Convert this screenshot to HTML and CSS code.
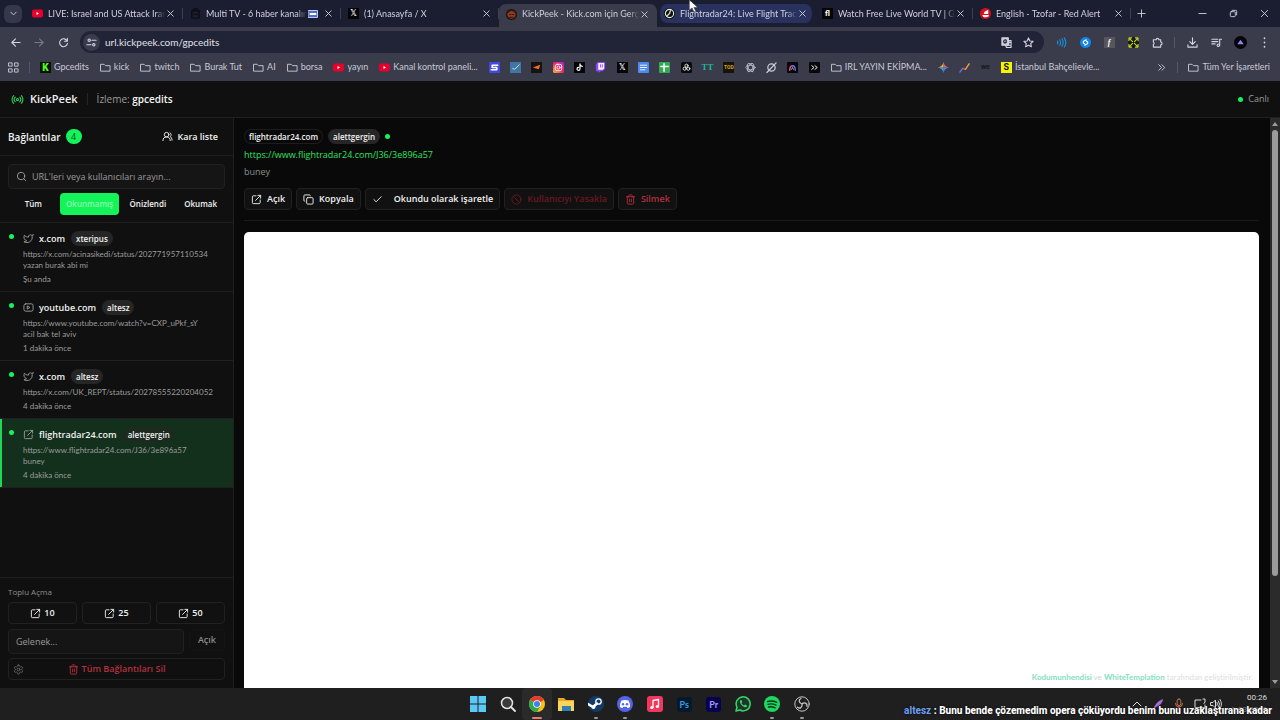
FILE: index.html
```
<!DOCTYPE html>
<html lang="tr">
<head>
<meta charset="utf-8">
<meta name="viewport" content="width=device-width, initial-scale=1.0">
<title>KickPeek - Kick.com için Gerçek Zamanlı</title>
<link rel="stylesheet" href="styles.css">
</head>
<body>

<svg class="sprite" aria-hidden="true">
  <symbol id="i-x" viewBox="0 0 10 10"><path d="M2 2l6 6M8 2l-6 6"/></symbol>
  <symbol id="i-down" viewBox="0 0 24 24"><path d="M6 9l6 6 6-6"/></symbol>
  <symbol id="i-folder" viewBox="0 0 24 20"><path d="M2 3h7l3 3h10v12H2z"/></symbol>
  <symbol id="i-yt" viewBox="0 0 22 16"><rect width="22" height="16" rx="4" fill="#e8002d" stroke="none"/><path d="M9 5l5 3-5 3z" fill="#fff" stroke="none"/></symbol>
  <symbol id="i-radio" viewBox="0 0 24 24"><path d="M4.9 19.1C1 15.2 1 8.8 4.9 4.9M7.8 16.2c-2.3-2.3-2.3-6.1 0-8.5M16.2 7.8c2.3 2.3 2.3 6.1 0 8.5M19.1 4.9C23 8.8 23 15.1 19.1 19"/><circle cx="12" cy="12" r="2"/></symbol>
  <symbol id="i-users" viewBox="0 0 24 24"><path d="M18 21a8 8 0 0 0-16 0"/><circle cx="10" cy="8" r="5"/><path d="M22 20c0-3.37-2-6.5-4-8a5 5 0 0 0-.45-8.3"/></symbol>
  <symbol id="i-search" viewBox="0 0 24 24"><circle cx="11" cy="11" r="8"/><path d="M21 21l-4.3-4.3"/></symbol>
  <symbol id="i-twitter" viewBox="0 0 24 24"><path d="M22 4s-.7 2.1-2 3.4c1.6 10-9.4 17.3-18 11.6 2.2.1 4.4-.6 6-2C3 15.5.5 9.6 3 5c2.2 2.6 5.6 4.1 9 4-.9-4.2 4-6.6 7-3.8 1.1 0 3-1.2 3-1.2z"/></symbol>
  <symbol id="i-youtube" viewBox="0 0 24 24"><rect x="2" y="4" width="20" height="16" rx="4"/><path d="M10 9l5 3-5 3z"/></symbol>
  <symbol id="i-open" viewBox="0 0 24 24"><path d="M20 13v6a2 2 0 0 1-2 2H5a2 2 0 0 1-2-2V6a2 2 0 0 1 2-2h6M21 3L10 14M15 3h6v6"/></symbol>
  <symbol id="i-copy" viewBox="0 0 24 24"><rect x="8" y="8" width="14" height="14" rx="2"/><path d="M4 16c-1.1 0-2-.9-2-2V4c0-1.1.9-2 2-2h10c1.1 0 2 .9 2 2"/></symbol>
  <symbol id="i-check" viewBox="0 0 24 24"><path d="M20 6L9 17l-5-5"/></symbol>
  <symbol id="i-ban" viewBox="0 0 24 24"><circle cx="12" cy="12" r="10"/><path d="M4.9 4.9l14.2 14.2"/></symbol>
  <symbol id="i-trash" viewBox="0 0 24 24"><path d="M3 6h18M19 6v14c0 1-1 2-2 2H7c-1 0-2-1-2-2V6M8 6V4c0-1 1-2 2-2h4c1 0 2 1 2 2v2M10 11v6M14 11v6"/></symbol>
  <symbol id="i-gear" viewBox="0 0 24 24"><path d="M12.22 2h-.44a2 2 0 0 0-2 2v.18a2 2 0 0 1-1 1.73l-.43.25a2 2 0 0 1-2 0l-.15-.08a2 2 0 0 0-2.73.73l-.22.38a2 2 0 0 0 .73 2.73l.15.1a2 2 0 0 1 1 1.72v.51a2 2 0 0 1-1 1.74l-.15.09a2 2 0 0 0-.73 2.73l.22.38a2 2 0 0 0 2.73.73l.15-.08a2 2 0 0 1 2 0l.43.25a2 2 0 0 1 1 1.73V20a2 2 0 0 0 2 2h.44a2 2 0 0 0 2-2v-.18a2 2 0 0 1 1-1.73l.43-.25a2 2 0 0 1 2 0l.15.08a2 2 0 0 0 2.73-.73l.22-.39a2 2 0 0 0-.73-2.73l-.15-.08a2 2 0 0 1-1-1.74v-.5a2 2 0 0 1 1-1.74l.15-.09a2 2 0 0 0 .73-2.73l-.22-.38a2 2 0 0 0-2.73-.73l-.15.08a2 2 0 0 1-2 0l-.43-.25a2 2 0 0 1-1-1.73V4a2 2 0 0 0-2-2z"/><circle cx="12" cy="12" r="3"/></symbol>
</svg>

<!-- browser tabs -->
<div class="tabstrip">
  <button class="tab-search" aria-label="Sekmelerde ara"><svg class="icon"><use href="#i-down"/></svg></button>
  <div class="tab">
    <svg class="fav"><use href="#i-yt"/></svg>
    <span class="tab-title">LIVE: Israel and US Attack Iran -</span>
    <button class="tab-close" aria-label="Kapat"><svg><use href="#i-x"/></svg></button>
  </div>
  <div class="tab">
    <svg class="fav" viewBox="0 0 12 12"><path d="M2 3h8v8H2zM4 1h4v2H4zM4 7h4" fill="none" stroke="#0b0d16" stroke-width="1.5"/></svg>
    <span class="tab-title">Multi TV - 6 haber kanalını</span>
    <svg class="pip" viewBox="0 0 10 8"><rect x=".5" y=".5" width="9" height="7" fill="#5271c4" stroke="#b9c8f5"/><path d="M2.500 4h5" stroke="#fff" stroke-width="2"/></svg>
    <button class="tab-close" aria-label="Kapat"><svg><use href="#i-x"/></svg></button>
  </div>
  <div class="tab">
    <span class="fav tile black math">𝕏</span>
    <span class="tab-title">(1) Anasayfa / X</span>
    <button class="tab-close" aria-label="Kapat"><svg><use href="#i-x"/></svg></button>
  </div>
  <div class="tab active">
    <svg class="fav" viewBox="0 0 12 12"><circle cx="6" cy="6" r="6" fill="#1c1210"/><circle cx="6" cy="6" r="4.500" fill="#8a3e22"/><path d="M2 4c2-3 6-3 8 0M4 6h1.500M7 6h1.500M4 9h4" stroke="#2c130c" fill="none"/></svg>
    <span class="tab-title">KickPeek - Kick.com için Gerçek</span>
    <button class="tab-close" aria-label="Kapat"><svg><use href="#i-x"/></svg></button>
  </div>
  <div class="tab hover">
    <svg class="fav" viewBox="0 0 12 12"><circle cx="6" cy="6" r="6" fill="#0d0f14"/><circle cx="6" cy="6" r="4.500" fill="none" stroke="#e8ecd8" stroke-width="1.200"/><path d="M6 6L3 9M6 6l1-3" stroke="#cfd6b0" stroke-width="1.500"/></svg>
    <span class="tab-title">Flightradar24: Live Flight Tracker</span>
    <button class="tab-close" aria-label="Kapat"><svg><use href="#i-x"/></svg></button>
  </div>
  <div class="tab">
    <span class="fav tile black">fl</span>
    <span class="tab-title">Watch Free Live World TV | Glo</span>
    <button class="tab-close" aria-label="Kapat"><svg><use href="#i-x"/></svg></button>
  </div>
  <div class="tab">
    <svg class="fav" viewBox="0 0 12 12"><circle cx="6" cy="6" r="6" fill="#d9101c"/><path d="M2.500 7.500h7v1.500q-3 2-6 .500zM4 6.500l1-2.500 4-2v4.500z" fill="#fff" stroke="none"/></svg>
    <span class="tab-title">English - Tzofar - Red Alert</span>
    <button class="tab-close" aria-label="Kapat"><svg><use href="#i-x"/></svg></button>
  </div>
  <button class="new-tab" aria-label="Yeni sekme"><svg viewBox="0 0 10 10"><path d="M5 1v8M1 5h8"/></svg></button>
  <div class="window-controls">
    <button aria-label="Küçült"><svg viewBox="0 0 10 10"><path d="M1 5h8"/></svg></button>
    <button aria-label="Geri yükle"><svg viewBox="0 0 10 10"><rect x="1.500" y="3" width="5.500" height="5.500" rx="1"/><path d="M3.500 1.500H7.500a1 1 0 0 1 1 1v4"/></svg></button>
    <button aria-label="Kapat"><svg viewBox="0 0 10 10"><path d="M1.500 1.500l7 7M8.500 1.500l-7 7"/></svg></button>
  </div>
  <svg class="cursor" viewBox="0 0 10 14"><path d="M1 0v11l3-2.500 2 4.500 2-1-2-4h4z" fill="#fff" stroke="#333" stroke-width=".6"/></svg>
</div>

<!-- address bar -->
<div class="toolbar">
  <button class="nav-btn" aria-label="Geri"><svg viewBox="0 0 12 12"><path d="M11 6H2M6 2L2 6l4 4"/></svg></button>
  <button class="nav-btn dim" aria-label="İleri"><svg viewBox="0 0 12 12"><path d="M1 6h9M6 2l4 4-4 4"/></svg></button>
  <button class="nav-btn" aria-label="Yenile"><svg viewBox="0 0 12 12"><path d="M10 4.500A4.300 4.300 0 1 0 10.300 7M10.200 1.500v3.200H7"/></svg></button>
  <div class="omnibox">
    <button class="site-info" aria-label="Site bilgileri"><svg viewBox="0 0 12 12"><circle cx="3.500" cy="3.500" r="1.300"/><path d="M6.500 3.500H11M1 8.500h4.500"/><circle cx="8.500" cy="8.500" r="1.300"/></svg></button>
    <input type="text" aria-label="Adres" value="url.kickpeek.com/gpcedits">
    <button aria-label="Çevir"><svg viewBox="0 0 12 12"><rect x="1" y="1" width="7" height="8" fill="#c9cad6"/><path d="M6.500 4H11v7.500H6L5 9" /><path d="M7 6h3.500M8.700 5v1c0 2-1 3-2 3.500M7.500 7c.5 1.500 1.500 2 2.500 2.500"/><path d="M6 4a1.700 1.700 0 1 0 .1 1.500H4.500" stroke="#2a2c3e"/></svg></button>
    <button aria-label="Yer işareti ekle"><svg viewBox="0 0 12 12"><path d="M6 1l1.500 3.300 3.500.4-2.600 2.400.7 3.500L6 8.900l-3.100 1.700.7-3.500L1 4.700l3.500-.4z"/></svg></button>
  </div>
  <div class="extensions">
    <button aria-label="Eklenti"><svg viewBox="0 0 12 12"><path d="M1.500 4.500q1 1.500 0 3M4 3q2 3 0 6M6.500 2q2.500 4 0 8M9 1q3.500 5 0 10" stroke="#1693e6"/></svg></button>
    <button aria-label="Shazam"><svg viewBox="0 0 12 12"><circle cx="6" cy="6" r="6" fill="#1286e8" stroke="none"/><path d="M6.800 3L4 4.600a1.500 1.500 0 0 0 0 2.200l1.200.700M5.200 9L8 7.400a1.500 1.500 0 0 0 0-2.200L6.800 4.500" stroke="#fff"/></svg></button>
    <button aria-label="Yazı tipi"><span class="tile grey"><i>f</i></span></button>
    <button aria-label="Tam ekran"><svg viewBox="0 0 12 12"><rect width="12" height="12" fill="#15170f" stroke="none"/><path d="M1 4V1h3M8 1h3v3M11 8v3H8M4 11H1V8M2 2l3 3M10 2L7 5M10 10L7 7M2 10l3-3" stroke="#c3d93a"/></svg></button>
    <button aria-label="Uzantılar"><svg viewBox="0 0 12 12"><path d="M1.500 3H4.500a1.500 1.500 0 0 1 3 0h2v2.500a1.500 1.500 0 0 1 0 3V11h-8V8a1.400 1.400 0 0 0 0-2.500z"/></svg></button>
    <span class="divider"></span>
    <button aria-label="İndirilenler"><svg viewBox="0 0 12 12"><path d="M6 1v6.500M3 5l3 3 3-3M1 8.500V11h10V8.500"/></svg></button>
    <button aria-label="Medya"><svg viewBox="0 0 12 12"><path d="M1 2.500h6.500M1 5h6.500M1 7.500h3.500M11.500 2.500H9.500V9"/><circle cx="8" cy="9" r="1.300"/></svg></button>
    <button aria-label="Profil"><svg class="avatar" viewBox="0 0 14 14"><circle cx="7" cy="7" r="7" fill="#05050a" stroke="none"/><path d="M7 4l3.500 5h-7z" fill="#8d84f0" stroke="none"/></svg></button>
    <button aria-label="Menü"><svg viewBox="0 0 12 12"><path d="M6 1.200v.4M6 5.800v.4M6 10.400v.4" stroke-width="1.800"/></svg></button>
  </div>
</div>

<!-- bookmarks -->
<nav class="bookmarks">
  <a href="#" aria-label="Uygulamalar"><svg class="bm-icon" viewBox="0 0 12 12"><path d="M1 1h3.500v3.500H1zM7.500 1H11v3.500H7.500zM1 7.500h3.500V11H1zM7.500 7.500H11V11H7.500z"/></svg></a>
  <span class="divider"></span>
  <a href="#"><span class="tile kick">K</span>Gpcedits</a>
  <a href="#"><svg class="bm-icon folder"><use href="#i-folder"/></svg>kick</a>
  <a href="#"><svg class="bm-icon folder"><use href="#i-folder"/></svg>twitch</a>
  <a href="#"><svg class="bm-icon folder"><use href="#i-folder"/></svg>Burak Tut</a>
  <a href="#"><svg class="bm-icon folder"><use href="#i-folder"/></svg>AI</a>
  <a href="#"><svg class="bm-icon folder"><use href="#i-folder"/></svg>borsa</a>
  <a href="#"><svg class="bm-icon"><use href="#i-yt"/></svg>yayın</a>
  <a href="#"><svg class="bm-icon"><use href="#i-yt"/></svg>Kanal kontrol paneli...</a>
  <div class="bm-sites">
    <a href="#" aria-label="Streamlabs"><svg class="bm-icon" viewBox="0 0 12 12"><rect width="12" height="12" fill="#4348e0" stroke="none"/><path d="M9.500 3.500h-6V6h5v2.500h-6" stroke="#fff" stroke-width="1.800"/></svg></a>
    <a href="#" aria-label="Çizim"><svg class="bm-icon" viewBox="0 0 12 12"><rect width="12" height="12" fill="#3f76a3" stroke="none"/><path d="M3 7l2 1 5-5" stroke="#d8ecf5"/></svg></a>
    <a href="#" aria-label="Oyun"><svg class="bm-icon" viewBox="0 0 12 12"><rect width="12" height="12" fill="#17120f" stroke="none"/><path d="M2 6l8-3-1.500 5z" fill="#e8722a" stroke="none"/></svg></a>
    <a href="#" aria-label="Instagram"><svg class="bm-icon" viewBox="0 0 12 12"><defs><linearGradient id="ig" x1="0" y1="1" x2="1" y2="0"><stop offset="0" stop-color="#ffb52e"/><stop offset=".5" stop-color="#f5245f"/><stop offset="1" stop-color="#a32be0"/></linearGradient></defs><rect width="12" height="12" rx="2" fill="url(#ig)" stroke="none"/><rect x="2.500" y="2.500" width="7" height="7" rx="2" stroke="#fff"/><circle cx="6" cy="6" r="1.700" stroke="#fff"/></svg></a>
    <a href="#" aria-label="TikTok"><svg class="bm-icon" viewBox="0 0 12 12"><rect width="12" height="12" fill="#050505" stroke="none"/><path d="M6.500 2v5.500a1.600 1.600 0 1 1-1.600-1.600M6.500 2.500c.3 1.500 1.200 2 2.500 2.200" stroke="#fff" stroke-width="1.300"/></svg></a>
    <a href="#" aria-label="Twitch"><svg class="bm-icon" viewBox="0 0 12 12"><path d="M1 2.500L3 0h8v7.500L8 10H6l-2 2v-2H1z" fill="#9147ff" stroke="none"/><path d="M3.500 1H10v6L8.500 8.500H3.500z" fill="#f4eeff" stroke="none"/><path d="M6 3v2.500M8 3v2.500" stroke="#9147ff"/></svg></a>
    <a href="#" aria-label="X"><span class="tile black math">𝕏</span></a>
    <a href="#" aria-label="Dokümanlar"><svg class="bm-icon" viewBox="0 0 12 12"><rect width="12" height="12" rx="1" fill="#4b8af0" stroke="none"/><path d="M2.500 3.500h7M2.500 6h7M2.500 8.500h5" stroke="#fff"/></svg></a>
    <a href="#" aria-label="E-Tablolar"><svg class="bm-icon" viewBox="0 0 12 12"><rect width="12" height="12" rx="1" fill="#34a853" stroke="none"/><path d="M2 5h8M5.500 2v8" stroke="#fff" stroke-width="1.600"/></svg></a>
    <a href="#" aria-label="GPT"><svg class="bm-icon" viewBox="0 0 12 12"><rect width="12" height="12" rx="2" fill="#0a0a0a" stroke="none"/><circle cx="6" cy="4" r="1.700" stroke="#eee"/><circle cx="4" cy="7.300" r="1.700" stroke="#eee"/><circle cx="8" cy="7.300" r="1.700" stroke="#eee"/></svg></a>
    <a href="#" aria-label="TT"><span class="tile teal">TT</span></a>
    <a href="#" aria-label="TOD"><span class="tile tod">TOD</span></a>
    <a href="#" aria-label="ChatGPT"><svg class="bm-icon" viewBox="0 0 12 12"><g stroke="#c4c5d0" stroke-width=".9"><ellipse cx="6" cy="6" rx="5" ry="2.500"/><ellipse cx="6" cy="6" rx="5" ry="2.500" transform="rotate(60 6 6)"/><ellipse cx="6" cy="6" rx="5" ry="2.500" transform="rotate(120 6 6)"/></g></svg></a>
    <a href="#" aria-label="Grok"><svg class="bm-icon" viewBox="0 0 12 12"><circle cx="6" cy="6" r="4" stroke-width="1.400"/><path d="M1 11.500L11 1" stroke-width="1.400"/></svg></a>
    <a href="#" aria-label="Artlist"><svg class="bm-icon" viewBox="0 0 12 12"><rect width="12" height="12" rx="1" fill="#08070d" stroke="none"/><path d="M3 9c0-3 1-5 3-5" stroke="#f04da0" stroke-width="1.600"/><path d="M6 4c2 0 3 2 3 5" stroke="#4d7af0" stroke-width="1.600"/><path d="M5 8l1-2 1 2" stroke="#f0a14d"/></svg></a>
    <a href="#" aria-label="Kısayol"><svg class="bm-icon" viewBox="0 0 12 12"><rect width="12" height="12" rx="1" fill="#08080a" stroke="none"/><path d="M3 4l2.500 2L3 8M6.500 4L9 6 6.500 8" stroke="#fff"/></svg></a>
  </div>
  <a href="#"><svg class="bm-icon folder"><use href="#i-folder"/></svg>IRL YAYIN EKİPMA...</a>
  <div class="bm-tight">
    <a href="#" aria-label="Gemini"><svg class="bm-icon" viewBox="0 0 12 12"><g stroke="none"><path d="M6 0q-1 5-6 6h6z" fill="#f0b63a"/><path d="M6 0q1 5 6 6H6z" fill="#ef5d62"/><path d="M12 6q-5 1-6 6V6z" fill="#4b7ff2"/><path d="M0 6q5 1 6 6V6z" fill="#37a4dc"/></g></svg></a>
    <a href="#" aria-label="Grafik"><svg class="bm-icon" viewBox="0 0 12 12"><path d="M1 11l3-4" stroke="#4b7ff2" stroke-width="1.500"/><path d="M4 7l3 1" stroke="#ef4d42" stroke-width="1.500"/><path d="M7 8l4-6" stroke="#f0a63a" stroke-width="1.500"/></svg></a>
    <a href="#" aria-label="WE"><span class="tile we">we</span></a>
    <a href="#"><span class="tile yellow">S</span>İstanbul Bahçelievle...</a>
  </div>
  <div class="bm-end">
    <button aria-label="Diğer yer işaretleri"><svg class="bm-icon" viewBox="0 0 12 12"><path d="M3 3l3 3-3 3M6.500 3l3 3-3 3"/></svg></button>
    <span class="divider"></span>
    <a href="#"><svg class="bm-icon folder"><use href="#i-folder"/></svg>Tüm Yer İşaretleri</a>
  </div>
</nav>

<div class="app">
  <header class="app-header">
    <svg class="icon logo"><use href="#i-radio"/></svg>
    <h1>KickPeek</h1>
    <p>İzleme: <strong>gpcedits</strong></p>
    <span class="live"><span class="dot"></span>Canlı</span>
  </header>

  <div class="app-body">
    <aside class="sidebar">
      <div class="sidebar-head">
        <h2>Bağlantılar</h2>
        <span class="count">4</span>
        <button class="blacklist"><svg class="icon"><use href="#i-users"/></svg>Kara liste</button>
      </div>

      <div class="filters">
        <label class="field">
          <svg class="icon"><use href="#i-search"/></svg>
          <input type="text" aria-label="Ara" placeholder="URL'leri veya kullanıcıları arayın...">
        </label>
        <div class="filter-tabs">
          <button>Tüm</button>
          <button class="selected">Okunmamış</button>
          <button>Önizlendi</button>
          <button>Okumak</button>
        </div>
      </div>

      <ul class="links">
        <li>
          <div class="link-head"><svg class="icon"><use href="#i-twitter"/></svg><b>x.com</b><span class="badge">xteripus</span></div>
          <p class="url">https://x.com/acinasikedi/status/202771957110534</p>
          <p>yazan burak abi mi</p>
          <time>Şu anda</time>
        </li>
        <li>
          <div class="link-head"><svg class="icon"><use href="#i-youtube"/></svg><b>youtube.com</b><span class="badge">altesz</span></div>
          <p class="url">https://www.youtube.com/watch?v=CXP_uPkf_sY</p>
          <p>acil bak tel aviv</p>
          <time>1 dakika önce</time>
        </li>
        <li>
          <div class="link-head"><svg class="icon"><use href="#i-twitter"/></svg><b>x.com</b><span class="badge">altesz</span></div>
          <p class="url">https://x.com/UK_REPT/status/20278555220204052</p>
          <time>4 dakika önce</time>
        </li>
        <li class="current">
          <div class="link-head"><svg class="icon"><use href="#i-open"/></svg><b>flightradar24.com</b><span class="badge">alettgergin</span></div>
          <p class="url">https://www.flightradar24.com/J36/3e896a57</p>
          <p>buney</p>
          <time>4 dakika önce</time>
        </li>
      </ul>

      <div class="bulk">
        <h3>Toplu Açma</h3>
        <div class="bulk-row">
          <button class="btn"><svg class="icon"><use href="#i-open"/></svg>10</button>
          <button class="btn"><svg class="icon"><use href="#i-open"/></svg>25</button>
          <button class="btn"><svg class="icon"><use href="#i-open"/></svg>50</button>
        </div>
        <div class="bulk-row custom">
          <label class="field"><input type="text" aria-label="Özel sayı" placeholder="Gelenek..."></label>
          <button class="btn muted">Açık</button>
        </div>
        <div class="delete-row">
          <button class="settings" aria-label="Ayarlar"><svg class="icon"><use href="#i-gear"/></svg></button>
          <button class="delete-all"><svg class="icon"><use href="#i-trash"/></svg>Tüm Bağlantıları Sil</button>
        </div>
      </div>
    </aside>

    <main class="preview">
      <div class="meta">
        <span class="badge outline">flightradar24.com</span>
        <span class="badge">alettgergin</span>
        <span class="dot"></span>
      </div>
      <a class="preview-url" href="#">https://www.flightradar24.com/J36/3e896a57</a>
      <p class="message">buney</p>
      <div class="actions">
        <button class="btn"><svg class="icon"><use href="#i-open"/></svg>Açık</button>
        <button class="btn"><svg class="icon"><use href="#i-copy"/></svg>Kopyala</button>
        <button class="btn read"><svg class="icon"><use href="#i-check"/></svg>Okundu olarak işaretle</button>
        <button class="btn ban"><svg class="icon"><use href="#i-ban"/></svg>Kullanıcıyı Yasakla</button>
        <button class="btn danger"><svg class="icon"><use href="#i-trash"/></svg>Silmek</button>
      </div>
      <div class="frame"></div>
      <p class="credits"><a href="#">Kodumunhendisi</a> ve <a href="#">WhiteTemplation</a> <span>tarafından geliştirilmiştir.</span></p>
    </main>

    <div class="scrollbar">
      <svg viewBox="0 0 8 6"><path d="M4 1l3 4H1z"/></svg>
      <div class="thumb"></div>
      <svg viewBox="0 0 8 6"><path d="M4 5l3-4H1z"/></svg>
    </div>
  </div>
</div>

<!-- windows taskbar -->
<footer class="taskbar">
  <div class="task-apps">
    <button aria-label="Başlat"><svg viewBox="0 0 16 16"><path d="M0 0h7.500v7.500H0zM8.500 0H16v7.500H8.500zM0 8.500h7.500V16H0zM8.500 8.500H16V16H8.500z" fill="#5cc8f5"/></svg></button>
    <button aria-label="Ara"><svg viewBox="0 0 16 16"><circle cx="7" cy="7" r="5.500" fill="#3a3a3a" stroke="#e4e4e4" stroke-width="1.500"/><path d="M11 11l4 4" stroke="#e4e4e4" stroke-width="1.800"/></svg></button>
    <button class="open focused" aria-label="Chrome"><svg viewBox="0 0 16 16"><circle cx="8" cy="8" r="8" fill="#fbc116"/><path d="M8 8L1.100 4a8 8 0 0 1 13.800 0z" fill="#e33b2e"/><path d="M8 8L1.100 4A8 8 0 0 0 8 16l3.500-6z" fill="#2da94f"/><circle cx="8" cy="8" r="3.800" fill="#fff"/><circle cx="8" cy="8" r="3" fill="#3c7ff0"/></svg></button>
    <button aria-label="Dosya Gezgini"><svg viewBox="0 0 16 16"><path d="M0 2h6l2 2h8v11H0z" fill="#e8a825"/><path d="M0 5h16v10H0z" fill="#fbd45c"/><path d="M4 10h9v5H4z" fill="#2f7fb8"/></svg></button>
    <button class="open" aria-label="Steam"><svg viewBox="0 0 16 16"><circle cx="8" cy="8" r="8" fill="#123a66"/><circle cx="10.500" cy="5.500" r="2.700" fill="none" stroke="#fff" stroke-width="1.300"/><path d="M0 8l5 3 4-3.500" stroke="#fff" stroke-width="2.500" fill="none"/><circle cx="5.500" cy="11" r="2" fill="#fff"/></svg></button>
    <button class="open" aria-label="Discord"><svg viewBox="0 0 16 16"><circle cx="8" cy="8" r="8" fill="#5562ea"/><path d="M4.500 4.500Q8 3.300 11.500 4.500 13.300 7.500 13 11q-1.500 1-2.500 1l-.8-1.200H6.300L5.500 12Q4.500 12 3 11q-.3-3.500 1.500-6.500z" fill="#fff"/><circle cx="6" cy="8.300" r="1.200" fill="#5562ea"/><circle cx="10" cy="8.300" r="1.200" fill="#5562ea"/></svg></button>
    <button aria-label="Müzik"><svg viewBox="0 0 16 16"><rect width="16" height="16" rx="3" fill="#f5365c"/><path d="M6 11.500V4.500l5.500-1v7" stroke="#fff" stroke-width="1.300" fill="none"/><circle cx="4.800" cy="11.500" r="1.600" fill="#fff"/><circle cx="10.300" cy="10.500" r="1.600" fill="#fff"/></svg></button>
    <button aria-label="Photoshop"><span class="adobe ps">Ps</span></button>
    <button aria-label="Premiere Pro"><span class="adobe pr">Pr</span></button>
    <button aria-label="WhatsApp"><svg viewBox="0 0 16 16"><path d="M1 15l1-3.800A7 7 0 1 1 4.800 14z" fill="#20352a" stroke="#34d868" stroke-width="1.500"/><path d="M5 4.500c-1 3 3.500 7.500 6.500 6.500l.5-1.500-2-1-1 1C8 9.200 6.800 8 6.500 7l.8-1L6.500 4z" fill="#34d868"/></svg></button>
    <button class="open" aria-label="Spotify"><svg viewBox="0 0 16 16"><circle cx="8" cy="8" r="8" fill="#1ed760"/><path d="M3.500 5.500q5-1.300 9.300.8M4 8.300q4.300-1 8 .8M4.500 11q3.500-.8 6.700.8" stroke="#10341e" stroke-width="1.300" fill="none" stroke-linecap="round"/></svg></button>
    <button class="open" aria-label="OBS"><svg viewBox="0 0 16 16"><circle cx="8" cy="8" r="7.200" fill="#1e1e20" stroke="#c8c8c8"/><path d="M8 8C4.500 7 4.500 3.500 7 2.500M8 8c2.500-2.500 5.500-.5 5 2.300M8 8c.8 3.500-2.300 5-4.500 3.200" stroke="#c8c8c8" stroke-width="1.300" fill="none"/></svg></button>
  </div>
  <div class="tray">
    <svg viewBox="0 0 12 12"><path d="M2 8l4-4 4 4"/></svg>
    <svg viewBox="0 0 12 12"><path d="M1 12Q3 4 11 1 11 6 4 9z" fill="#a56be0" stroke="none"/></svg>
    <svg viewBox="0 0 12 12"><path d="M6 1a1.800 1.800 0 0 1 1.800 1.800v3a1.800 1.800 0 0 1-3.600 0v-3A1.800 1.800 0 0 1 6 1zM2.500 5.500a3.500 3.500 0 0 0 7 0M6 9v2.500" stroke="#c4714a"/></svg>
    <span class="tray-group">
      <svg viewBox="0 0 12 12"><path d="M7 2H1v7.500h10V7M4 11.500h4M9 1h2v3l-1 1.500"/></svg>
      <svg viewBox="0 0 12 12"><path d="M1 4.500h2L5.500 2v8L3 7.500H1zM7 4.500q1 1.500 0 3M8.500 3q2 3 0 6M10 1.500q3 4.500 0 9"/></svg>
    </span>
    <span class="clock"><time>00:26</time><time>1.03.2026</time></span>
  </div>
  <p class="caption"><span>altesz</span> : Bunu bende çözemedim opera çöküyordu benim bunu uzaklaştırana kadar</p>
</footer>

</body>
</html>
```
FILE: styles.css
```
* {
  box-sizing: border-box;
}

body {
  margin: 0;
  height: 100vh;
  display: flex;
  flex-direction: column;
  overflow: hidden;
  font-family: Lato, "Open Sans", sans-serif;
  font-size: 9px;
  line-height: 12px;
  color: #f2f2f2;
  background: #090909;
}

h1, h2, h3, p, ul {
  margin: 0;
  padding: 0;
}

a {
  color: inherit;
  text-decoration: none;
}

button {
  padding: 0;
  border: none;
  background: none;
  color: inherit;
  font: inherit;
  display: flex;
  align-items: center;
  justify-content: center;
}

input {
  min-width: 0;
  flex: 1;
  padding: 0;
  border: none;
  outline: none;
  background: none;
  color: inherit;
  font: inherit;
}

svg {
  flex: none;
  fill: none;
  stroke: currentColor;
  stroke-linecap: round;
  stroke-linejoin: round;
}

.sprite {
  display: none;
}

.icon {
  width: 11px;
  height: 11px;
  stroke-width: 2;
}

.divider {
  width: 1px;
  height: 11px;
  background: #55576a;
}

/* small square site icons made of letters */
.tile {
  width: 11px;
  height: 11px;
  flex: none;
  display: flex;
  align-items: center;
  justify-content: center;
  font-family: Roboto, sans-serif;
  font-size: 8px;
  line-height: 11px;
  font-weight: 700;
}

.tile.black { background: #050505; color: #fff; }
.tile.math { font-family: "DejaVu Sans", sans-serif; }
.tile.grey { background: #56565c; color: #fff; font-family: "Liberation Serif", serif; }
.tile.kick { background: #0b1207; color: #53fc18; font-size: 10px; font-weight: 900; }
.tile.teal { color: #1fb598; font-family: "Liberation Serif", serif; font-size: 9px; }
.tile.tod { background: #17130b; color: #d9a520; font-size: 5px; }
.tile.we { color: #17181f; font-size: 7px; }
.tile.yellow { background: #f5f500; color: #111; font-size: 9px; }

/* tabs */
.tabstrip {
  position: relative;
  display: flex;
  align-items: center;
  height: 27px;
  flex: none;
  background: #1b1e30;
  color: #cfd1de;
}

.tab-search {
  width: 18px;
  height: 18px;
  margin: 0 3px 0 4px;
  border-radius: 6px;
  background: #35374a;
}

.tab {
  flex: 0 1 158px;
  min-width: 0;
  height: 19px;
  display: flex;
  align-items: center;
  padding: 0 8px 0 7px;
  position: relative;
}

.tab::after {
  content: "";
  position: absolute;
  right: 0;
  top: 4px;
  width: 1px;
  height: 11px;
  background: #3c3f54;
}

.tab.active {
  height: 23px;
  align-self: flex-end;
  padding-bottom: 3px;
  border-radius: 7px 7px 0 0;
  background: #3a3b4b;
}

.tab.hover {
  padding: 0 5px 0 4px;
  border: solid transparent;
  border-width: 0 3px;
  border-radius: 9px;
  background: #29325f padding-box;
}

.tab.active::after,
.tab.hover::after {
  display: none;
}

.fav {
  width: 11px;
  height: 11px;
  flex: none;
  stroke: none;
}

.tab-title {
  flex: 1;
  min-width: 0;
  margin: 0 1px 0 5px;
  overflow: hidden;
  white-space: nowrap;
  -webkit-mask-image: linear-gradient(to left, transparent, #000 10px);
  mask-image: linear-gradient(to left, transparent, #000 10px);
}

.pip {
  width: 10px;
  height: 8px;
  margin-right: 6px;
}

.tab-close svg {
  width: 9px;
  height: 9px;
}

.new-tab {
  width: 20px;
}

.new-tab svg,
.window-controls svg {
  width: 9px;
  height: 9px;
}

.window-controls {
  margin-left: auto;
  display: flex;
}

.window-controls button {
  width: 31px;
}

.cursor {
  position: absolute;
  left: 688px;
  top: 0;
  width: 10px;
  height: 13px;
}

/* toolbar */
.toolbar {
  display: flex;
  align-items: center;
  height: 30px;
  flex: none;
  padding: 0 4px 0 3px;
  background: #3a3b4b;
  color: #d4d5e0;
}

.toolbar svg {
  width: 11px;
  height: 11px;
  stroke-width: 1.2;
}

.nav-btn {
  width: 24px;
}

.nav-btn.dim {
  color: #77798a;
}

.omnibox {
  flex: 1;
  display: flex;
  align-items: center;
  height: 22px;
  margin-left: 5px;
  padding: 0 5px 0 3px;
  border-radius: 11px;
  background: #212436;
}

.omnibox button {
  width: 22px;
}

.omnibox .site-info {
  width: 17px;
  height: 17px;
  margin-right: 5px;
  border-radius: 50%;
  background: #3a3c4e;
}

.omnibox input {
  font-size: 10px;
  color: #e0e1ea;
}

.extensions {
  display: flex;
  align-items: center;
  margin-left: 5px;
}

.extensions button {
  width: 24px;
}

.extensions .divider {
  margin: 0 5px;
}

.toolbar .avatar {
  width: 13px;
  height: 13px;
}

/* bookmarks */
.bookmarks {
  display: flex;
  align-items: center;
  gap: 11px;
  height: 24px;
  flex: none;
  padding: 0 10px 4px 8px;
  background: #3a3b4b;
  color: #c9cad6;
  white-space: nowrap;
}

.bookmarks a {
  display: flex;
  align-items: center;
  gap: 3px;
}

.bookmarks > .divider {
  margin: 0 -1px;
}

.bm-icon {
  width: 11px;
  height: 11px;
}

.folder {
  stroke-width: 2;
}

.bm-sites {
  flex: 0 0 331px;
  display: flex;
  justify-content: space-between;
}

.bm-tight {
  display: flex;
  gap: 10px;
}

.bm-end {
  margin-left: auto;
  display: flex;
  align-items: center;
  gap: 10px;
}

/* app */
.app {
  flex: 1;
  min-height: 0;
  display: flex;
  flex-direction: column;
  font-family: "Open Sans", "Noto Sans", sans-serif;
}

.app-header {
  display: flex;
  align-items: center;
  height: 37px;
  flex: none;
  padding: 0 11px;
  background: #101010;
  border-bottom: 1px solid #202020;
}

.app-header h1 {
  margin: 0 9px 0 6px;
  font-size: 11px;
  font-weight: 600;
}

.app-header p {
  padding-left: 9px;
  border-left: 1px solid #262626;
  font-size: 10px;
  color: #9a9a9a;
}

.app-header strong {
  font-weight: 600;
  color: #f5f5f5;
}

.logo {
  width: 13px;
  height: 13px;
  color: #26d35c;
}

.dot {
  width: 5px;
  height: 5px;
  border-radius: 50%;
  background: #12f45a;
}

.live {
  margin-left: auto;
  display: flex;
  align-items: center;
  gap: 5px;
  color: #9a9a9a;
}

.app-body {
  flex: 1;
  min-height: 0;
  display: flex;
}

.sidebar {
  width: 234px;
  flex: none;
  display: flex;
  flex-direction: column;
  background: #101010;
  border-right: 1px solid #202020;
}

.sidebar-head {
  display: flex;
  align-items: center;
  gap: 5px;
  height: 38px;
  padding: 0 15px 0 8px;
  border-bottom: 1px solid #202020;
}

.sidebar-head h2 {
  font-size: 10px;
  font-weight: 600;
}

.count {
  width: 16px;
  height: 15px;
  border-radius: 8px;
  background: #12f45a;
  color: #0c4a20;
  line-height: 15px;
  text-align: center;
}

.blacklist {
  margin-left: auto;
  gap: 4px;
  font-weight: 600;
}

.filters {
  padding: 8px 8px 7px;
  border-bottom: 1px solid #202020;
}

.field {
  display: flex;
  align-items: center;
  gap: 5px;
  height: 25px;
  padding: 0 7px;
  border: 1px solid #212121;
  border-radius: 4px;
  background: #151515;
  color: #a3a3a3;
}

.field input::placeholder {
  color: #9a9a9a;
  opacity: 1;
}

.filter-tabs {
  display: grid;
  grid-template-columns: 51fr 60fr 55fr 49fr;
  gap: 1px;
  margin-top: 4px;
}

.filter-tabs button {
  height: 22px;
  border-radius: 4px;
  font-size: 8px;
  font-weight: 600;
}

.filter-tabs .selected {
  background: #12f45a;
  color: #8dffab;
}

.links {
  flex: 1;
  min-height: 0;
  list-style: none;
  font-family: Lato, sans-serif;
  font-size: 8px;
  line-height: 11px;
  color: #9c9c9c;
}

.links li {
  position: relative;
  padding: 8px 20px 6px 23px;
  border-bottom: 1px solid #202020;
}

.links li::before {
  content: "";
  position: absolute;
  left: 9px;
  top: 11px;
  width: 5px;
  height: 5px;
  border-radius: 50%;
  background: #12f45a;
}

.links .current {
  background: #12301b;
  box-shadow: inset 2px 0 #22d65a;
}

.link-head {
  display: flex;
  align-items: center;
  gap: 5px;
  height: 15px;
  margin-bottom: 3px;
  font-family: "Open Sans", sans-serif;
}

.link-head b {
  margin-right: 1px;
  font-size: 9px;
  font-weight: 600;
  color: #f2f2f2;
}

.url {
  overflow: hidden;
  white-space: nowrap;
}

.links time {
  display: block;
  margin-top: 3px;
}

.badge {
  height: 15px;
  padding: 0 5px;
  border-radius: 8px;
  background: #262626;
  color: #f2f2f2;
  font-size: 8px;
  font-weight: 600;
  line-height: 15px;
}

.badge.outline {
  background: none;
  box-shadow: inset 0 0 0 1px #1d1d1d;
}

.current .badge {
  background: #1c2a20;
}

.bulk {
  padding: 8px;
  border-top: 1px solid #202020;
}

.bulk h3 {
  font-size: 8px;
  font-weight: 500;
  color: #8f8f8f;
  margin-bottom: 4px;
}

.bulk-row {
  display: flex;
  gap: 5px;
  margin-bottom: 5px;
}

.bulk-row .btn {
  flex: 1;
  gap: 3px;
}

.bulk-row .field {
  flex: 1;
}

.bulk-row.custom {
  margin-bottom: 4px;
}

.bulk-row .muted {
  flex: none;
  padding: 0 8px;
  color: #8c8c8c;
  border-color: #141414;
}

.btn {
  height: 22px;
  padding: 0 6px;
  gap: 5px;
  border: 1px solid #212121;
  border-radius: 4px;
  background: #111;
  font-weight: 600;
}

.delete-row {
  display: flex;
  height: 22px;
  padding-left: 4px;
  border: 1px solid #212121;
  border-radius: 4px;
}

.delete-row .settings {
  color: #666;
}

.delete-row .delete-all {
  flex: 1;
  gap: 3px;
  padding-right: 15px;
  font-weight: 600;
  color: #b3303c;
}

/* preview */
.preview {
  position: relative;
  flex: 1;
  min-width: 0;
  display: flex;
  flex-direction: column;
  padding: 11px 11px 0 10px;
  background: #090909;
}

.meta {
  display: flex;
  align-items: center;
  gap: 5px;
}

.preview-url {
  margin-top: 5px;
  color: #2fe263;
}

.message {
  margin-top: 5px;
  color: #8f8f8f;
}

.actions {
  display: flex;
  gap: 4px;
  margin-top: 10px;
  padding-bottom: 10px;
  border-bottom: 1px solid #1b1b1b;
}

.btn.read {
  gap: 11px;
}

.btn.ban {
  color: #6b1820;
}

.btn.danger {
  color: #b3303c;
}

.frame {
  flex: 1;
  margin-top: 11px;
  border-radius: 5px 5px 0 0;
  background: #fff;
}

.credits {
  position: absolute;
  right: 17px;
  bottom: 5px;
  font-family: Lato, sans-serif;
  font-size: 8px;
  color: #c9d6d0;
}

.credits a {
  color: #86dfc0;
  font-weight: 700;
}

.credits span {
  color: #dedede;
}

.scrollbar {
  width: 10px;
  flex: none;
  display: flex;
  flex-direction: column;
  align-items: center;
  padding: 3px 0;
  background: #2b2b2b;
}

.scrollbar svg {
  width: 8px;
  height: 6px;
  fill: #9b9b9b;
  stroke: none;
}

.thumb {
  width: 6px;
  height: 79%;
  margin: 3px 0 auto;
  border-radius: 3px;
  background: #9b9b9b;
}

/* taskbar */
.taskbar {
  position: relative;
  display: flex;
  justify-content: center;
  height: 32px;
  flex: none;
  background: #201f1f;
}

.task-apps {
  display: flex;
  width: 353px;
}

.task-apps button {
  position: relative;
  flex: 1;
}

.task-apps svg {
  width: 16px;
  height: 16px;
  stroke: none;
}

.task-apps .focused {
  border-radius: 4px;
  background: #2b2a2a;
}

.task-apps .open::after {
  content: "";
  position: absolute;
  bottom: 1px;
  width: 4px;
  height: 2px;
  border-radius: 1px;
  background: #9a9a9a;
}

.task-apps .focused::after {
  width: 10px;
  background: #e5816f;
}

.adobe {
  width: 15px;
  height: 15px;
  border-radius: 3px;
  line-height: 15px;
  font-weight: 700;
}

.ps { background: #04192b; color: #2f9fe8; }
.pr { background: #07004f; color: #a79bf5; }

.tray {
  position: absolute;
  right: 13px;
  top: 4px;
  display: flex;
  align-items: center;
  gap: 9px;
  color: #dcdcdc;
}

.tray svg {
  width: 12px;
  height: 12px;
}

.tray-group {
  display: flex;
  gap: 4px;
}

.clock {
  display: flex;
  flex-direction: column;
  align-items: flex-end;
  font-family: Roboto, sans-serif;
  font-size: 8px;
}

.clock time:last-child {
  color: #8a8484;
}

.caption {
  position: absolute;
  right: 8px;
  bottom: 3px;
  font-family: Roboto, sans-serif;
  font-size: 10px;
  font-weight: 800;
  color: #fff;
  white-space: nowrap;
  text-shadow: 0 0 2px #000;
}

.caption span {
  color: #6c9be8;
}
```
